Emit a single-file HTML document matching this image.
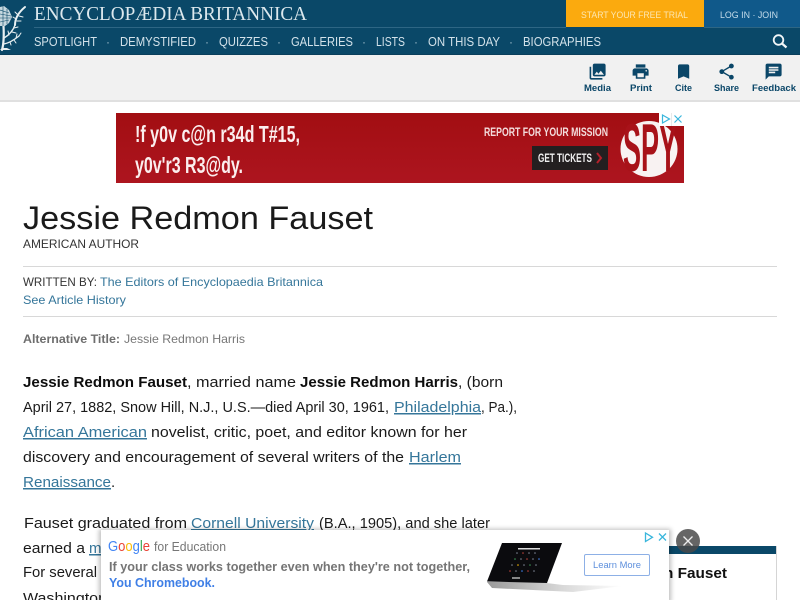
<!DOCTYPE html>
<html><head><meta charset="utf-8"><title>Jessie Redmon Fauset</title>
<style>
html,body{margin:0;padding:0;background:#fff;width:800px;height:600px;overflow:hidden}
svg{display:block;position:absolute;left:0;top:0}
text{font-family:"Liberation Sans",sans-serif}
.b{font-size:15px;fill:#1a1a1a}
.bb{font-size:15px;fill:#0d0d0d;font-weight:bold}
.l{font-size:15px;fill:#35769a;text-decoration:underline}
.n{font-size:13px;fill:#d3e2ea}
.d{font-size:12px;fill:#9fbccb}
.t{font-size:9.5px;font-weight:bold;fill:#0a4668}
</style></head><body>
<svg width="800" height="600" viewBox="0 0 800 600" xmlns="http://www.w3.org/2000/svg">
<defs>
<linearGradient id="red" x1="0" y1="0" x2="0" y2="1"><stop offset="0" stop-color="#a20e12"/><stop offset="1" stop-color="#ad151f"/></linearGradient>
<linearGradient id="base" x1="0" y1="0" x2="1" y2="0"><stop offset="0" stop-color="#9a9a9a"/><stop offset=".55" stop-color="#d8d8d8"/><stop offset="1" stop-color="#fff"/></linearGradient>
<filter id="sh" x="-5%" y="-30%" width="110%" height="160%"><feGaussianBlur stdDeviation="2.5"/></filter>
</defs>
<!-- header -->
<rect width="800" height="54" fill="#0a4868"/>
<rect y="54" width="800" height="1" fill="#0a3f5c"/>
<rect x="34" y="27" width="532" height="1" fill="#2e6684"/>
<rect x="566" width="138" height="27" fill="#fbaa0e"/>
<rect x="704" width="96" height="27" fill="#10598a"/>
<rect x="704" y="27" width="96" height="1" fill="#2e6684"/>
<!-- thistle -->
<g fill="none" stroke="#e8f0f2" stroke-linecap="round">
<path d="M2 50C4 43 4 35 3.500 26" stroke-width="2.200"/>
<path d="M4 38C9 35 13 31 15 25" stroke-width="1.400"/>
<path d="M4 44C9 43 14 40 19 36" stroke-width="1.300"/>
<path d="M15 25C15 18 19 12 25 7" stroke-width="2"/>
<path d="M9 35l-1-4M12 32l4 1M14 28l4-1M16 19l-3-2M18 15l-3-3M17 21l4 0M19 16l4 1M10 42l1 3M14 40l2 3M16 38l1-4M19 36l2-3" stroke-width="1"/>
</g>
<path d="M0 50h11l-4-2H2z" fill="#e8f0f2"/>
<path d="M0 7l4-1 5 4 3 7-3 6-4 3H0z" fill="#c6d8df"/>
<g stroke="#0a4868" stroke-width=".6"><path d="M0 10l9 3M0 14l11 2M0 18l11 0M0 22l9-2M3 6v20M7 9v15"/></g>
<text x="34" y="20" textLength="273" lengthAdjust="spacingAndGlyphs" style="font-family:'Liberation Serif',serif;font-size:20px;fill:#dce8ed">ENCYCLOPÆDIA BRITANNICA</text>
<text x="581" y="18" textLength="107" lengthAdjust="spacingAndGlyphs" style="font-size:9px;fill:#fde6b0">START YOUR FREE TRIAL</text>
<text x="720" y="18" textLength="58" lengthAdjust="spacingAndGlyphs" style="font-size:9px;fill:#c5dcea">LOG IN · JOIN</text>
<g>
<text class="n" x="34" y="46" textLength="63" lengthAdjust="spacingAndGlyphs">SPOTLIGHT</text>
<text class="d" x="106" y="46">·</text>
<text class="n" x="120" y="46" textLength="76" lengthAdjust="spacingAndGlyphs">DEMYSTIFIED</text>
<text class="d" x="205" y="46">·</text>
<text class="n" x="219" y="46" textLength="49" lengthAdjust="spacingAndGlyphs">QUIZZES</text>
<text class="d" x="277" y="46">·</text>
<text class="n" x="291" y="46" textLength="62" lengthAdjust="spacingAndGlyphs">GALLERIES</text>
<text class="d" x="362" y="46">·</text>
<text class="n" x="376" y="46" textLength="29" lengthAdjust="spacingAndGlyphs">LISTS</text>
<text class="d" x="414" y="46">·</text>
<text class="n" x="428" y="46" textLength="72" lengthAdjust="spacingAndGlyphs">ON THIS DAY</text>
<text class="d" x="509" y="46">·</text>
<text class="n" x="523" y="46" textLength="78" lengthAdjust="spacingAndGlyphs">BIOGRAPHIES</text>
</g>
<g fill="none" stroke="#f2f6f8"><circle cx="778.500" cy="40" r="4.800" stroke-width="1.800"/><path d="M782 43.500l4.500 4" stroke-width="2.200"/></g>
<!-- toolbar -->
<rect y="55" width="800" height="45" fill="#f1f1f1"/>
<rect y="100" width="800" height="2" fill="#e0e0e0"/>
<g fill="#0a4668">
<path transform="translate(588,62) scale(.8)" d="M22 16V4c0-1.100-.9-2-2-2H8c-1.100 0-2 .9-2 2v12c0 1.100.9 2 2 2h12c1.100 0 2-.9 2-2zm-11-4l2.030 2.710L16 11l4 5H8l3-4zM2 6v14c0 1.100.9 2 2 2h14v-2H4V6H2z"/>
<path transform="translate(631,62) scale(.8)" d="M19 8H5c-1.660 0-3 1.340-3 3v6h4v4h12v-4h4v-6c0-1.660-1.340-3-3-3zm-3 11H8v-5h8v5zm3-7c-.55 0-1-.45-1-1s.45-1 1-1 1 .45 1 1-.45 1-1 1zm-1-9H6v4h12V3z"/>
<path transform="translate(674,62) scale(.8)" d="M17 3H7c-1.100 0-1.990.9-1.990 2L5 21l7-3 7 3V5c0-1.100-.9-2-2-2z"/>
<path transform="translate(717,62) scale(.8)" d="M18 16.080c-.76 0-1.440.3-1.960.77L8.910 12.700c.05-.23.09-.46.09-.7s-.04-.47-.09-.7l7.050-4.110c.54.5 1.250.81 2.040.81 1.660 0 3-1.340 3-3s-1.340-3-3-3-3 1.340-3 3c0 .24.04.47.09.7L8.040 9.810C7.500 9.310 6.790 9 6 9c-1.660 0-3 1.340-3 3s1.340 3 3 3c.79 0 1.500-.31 2.040-.81l7.120 4.160c-.05.21-.08.43-.08.65 0 1.610 1.310 2.920 2.920 2.920 1.610 0 2.920-1.310 2.920-2.920s-1.310-2.920-2.920-2.920z"/>
<path transform="translate(764,62) scale(.8)" d="M20 2H4c-1.100 0-1.990.9-1.990 2L2 22l4-4h14c1.100 0 2-.9 2-2V4c0-1.100-.9-2-2-2zM6 9h12v2H6V9zm8 5H6v-2h8v2zm4-6H6V6h12v2z"/>
</g>
<text class="t" x="584" y="91" textLength="27" lengthAdjust="spacingAndGlyphs">Media</text>
<text class="t" x="630" y="91" textLength="22" lengthAdjust="spacingAndGlyphs">Print</text>
<text class="t" x="675" y="91" textLength="17" lengthAdjust="spacingAndGlyphs">Cite</text>
<text class="t" x="714" y="91" textLength="25" lengthAdjust="spacingAndGlyphs">Share</text>
<text class="t" x="752" y="91" textLength="44" lengthAdjust="spacingAndGlyphs">Feedback</text>
<!-- banner ad -->
<rect x="116" y="113" width="568" height="70" fill="url(#red)"/>
<text x="135" y="142" textLength="165" lengthAdjust="spacingAndGlyphs" style="font-size:23px;font-weight:bold;fill:#fbeeee">!f y0v c@n r34d T#15,</text>
<text x="135" y="173" textLength="108" lengthAdjust="spacingAndGlyphs" style="font-size:23px;font-weight:bold;fill:#fbeeee">y0v'r3 R3@dy.</text>
<text x="484" y="136" textLength="124" lengthAdjust="spacingAndGlyphs" style="font-size:11.500px;font-weight:bold;fill:#f3dcdc">REPORT FOR YOUR MISSION</text>
<rect x="532" y="146" width="76" height="24" fill="#231f20"/>
<text x="538" y="162" textLength="54" lengthAdjust="spacingAndGlyphs" style="font-size:11.500px;font-weight:bold;fill:#f0f0f0">GET TICKETS</text>
<path d="M597 153l4 5-4 5" fill="none" stroke="#b3202a" stroke-width="2"/>
<ellipse cx="649" cy="149" rx="28.500" ry="28" fill="#f8f2f2"/>
<text x="623" y="171" textLength="54" lengthAdjust="spacingAndGlyphs" style="font-size:68px;font-weight:bold;fill:#a81219">SPY</text>
<rect x="659" y="113" width="25" height="13" fill="#fff"/>
<path d="M662.500 115v8l7-4z" fill="none" stroke="#39b6dc" stroke-width="1.200"/>
<rect x="671" y="113" width="1" height="13" fill="#e8e8e8"/>
<path d="M674.500 115.500l7 7M681.500 115.500l-7 7" stroke="#39b6dc" stroke-width="1.200"/>
<!-- title -->
<text x="23" y="229" textLength="350" lengthAdjust="spacingAndGlyphs" style="font-size:32px;fill:#1a1a1a">Jessie Redmon Fauset</text>
<text x="23" y="248" textLength="116" lengthAdjust="spacingAndGlyphs" style="font-size:12px;fill:#333">AMERICAN AUTHOR</text>
<rect x="23" y="266" width="754" height="1" fill="#d8d8d8"/>
<text x="23" y="286" textLength="74" lengthAdjust="spacingAndGlyphs" style="font-size:12px;fill:#333">WRITTEN BY:</text>
<text x="100" y="286" textLength="223" lengthAdjust="spacingAndGlyphs" style="font-size:12px;fill:#35769a">The Editors of Encyclopaedia Britannica</text>
<text x="23" y="304" textLength="103" lengthAdjust="spacingAndGlyphs" style="font-size:12px;fill:#35769a">See Article History</text>
<rect x="23" y="316" width="754" height="1" fill="#d8d8d8"/>
<text x="23" y="343" textLength="97" lengthAdjust="spacingAndGlyphs" style="font-size:12px;font-weight:bold;fill:#6e6e6e">Alternative Title:</text>
<text x="124" y="343" textLength="121" lengthAdjust="spacingAndGlyphs" style="font-size:12px;fill:#777">Jessie Redmon Harris</text>
<!-- body -->
<text class="bb" x="23" y="387" textLength="164" lengthAdjust="spacingAndGlyphs">Jessie Redmon Fauset</text>
<text class="b" x="187" y="387" textLength="109" lengthAdjust="spacingAndGlyphs">, married name</text>
<text class="bb" x="300" y="387" textLength="158" lengthAdjust="spacingAndGlyphs">Jessie Redmon Harris</text>
<text class="b" x="458" y="387" textLength="45" lengthAdjust="spacingAndGlyphs">, (born</text>
<text class="b" x="23" y="412" textLength="366" lengthAdjust="spacingAndGlyphs">April 27, 1882, Snow Hill, N.J., U.S.—died April 30, 1961,</text>
<text class="l" x="394" y="412" textLength="87" lengthAdjust="spacingAndGlyphs">Philadelphia</text>
<text class="b" x="481" y="412" textLength="36" lengthAdjust="spacingAndGlyphs">, Pa.),</text>
<text class="l" x="23" y="437" textLength="124" lengthAdjust="spacingAndGlyphs">African American</text>
<text class="b" x="151" y="437" textLength="316" lengthAdjust="spacingAndGlyphs">novelist, critic, poet, and editor known for her</text>
<text class="b" x="23" y="462" textLength="381" lengthAdjust="spacingAndGlyphs">discovery and encouragement of several writers of the</text>
<text class="l" x="409" y="462" textLength="52" lengthAdjust="spacingAndGlyphs">Harlem</text>
<text class="l" x="23" y="487" textLength="88" lengthAdjust="spacingAndGlyphs">Renaissance</text>
<text class="b" x="111" y="487">.</text>
<text class="b" x="24" y="528" textLength="163" lengthAdjust="spacingAndGlyphs">Fauset graduated from</text>
<text class="l" x="191" y="528" textLength="123" lengthAdjust="spacingAndGlyphs">Cornell University</text>
<text class="b" x="319" y="528" textLength="171" lengthAdjust="spacingAndGlyphs">(B.A., 1905), and she later</text>
<text class="b" x="23" y="553" textLength="62" lengthAdjust="spacingAndGlyphs">earned a</text>
<text class="l" x="89" y="553">master</text>
<text class="b" x="23" y="577" textLength="74" lengthAdjust="spacingAndGlyphs">For several</text>
<text class="b" x="23" y="603" textLength="84" lengthAdjust="spacingAndGlyphs">Washington</text>
<!-- right box -->
<rect x="640" y="554" width="136" height="46" fill="#fff"/>
<rect x="640" y="546" width="136" height="8" fill="#0a4868"/>
<rect x="776" y="546" width="1" height="54" fill="#d5d5d5"/>
<text x="664" y="578" textLength="63" lengthAdjust="spacingAndGlyphs" style="font-size:14.500px;font-weight:bold;fill:#111">n Fauset</text>
<!-- bottom ad -->
<rect x="99" y="529" width="572" height="74" fill="#000" opacity=".25" filter="url(#sh)"/>
<rect x="101" y="530" width="568" height="70" fill="#fff"/>
<text x="108" y="551" textLength="42" lengthAdjust="spacingAndGlyphs" style="font-size:15px"><tspan fill="#4285f4">G</tspan><tspan fill="#ea4335">o</tspan><tspan fill="#fbbc05">o</tspan><tspan fill="#4285f4">g</tspan><tspan fill="#34a853">l</tspan><tspan fill="#ea4335">e</tspan></text>
<text x="154" y="551" textLength="72" lengthAdjust="spacingAndGlyphs" style="font-size:12.500px;fill:#777">for Education</text>
<text x="109" y="571" textLength="361" lengthAdjust="spacingAndGlyphs" style="font-size:12.500px;font-weight:bold;fill:#757575">If your class works together even when they're not together,</text>
<text x="109" y="587" textLength="106" lengthAdjust="spacingAndGlyphs" style="font-size:12.500px;font-weight:bold;fill:#3f7fe6">You Chromebook.</text>
<!-- laptop -->
<path d="M487 582l5 6 81 4 50-6-60-1-25-3z" fill="url(#base)"/>
<path d="M502 543h60l-15 40-60-1.500z" fill="#0b0b0e"/>
<rect x="518" y="548" width="22" height="1.500" fill="#ddd"/>
<g fill="#7f8796">
<circle cx="517" cy="553" r=".8"/><circle cx="523" cy="553" r=".8" fill="#c0453c"/><circle cx="529" cy="553" r=".8"/><circle cx="535" cy="553" r=".8"/>
<circle cx="515" cy="559" r=".8" fill="#3f9a58"/><circle cx="521" cy="559" r=".8"/><circle cx="527" cy="559" r=".8" fill="#c0453c"/><circle cx="533" cy="559" r=".8"/><circle cx="539" cy="559" r=".8" fill="#4285f4"/>
<circle cx="512" cy="565" r=".8"/><circle cx="518" cy="565" r=".8" fill="#fbbc05"/><circle cx="524" cy="565" r=".8"/><circle cx="530" cy="565" r=".8" fill="#3f9a58"/><circle cx="536" cy="565" r=".8"/>
<circle cx="510" cy="571" r=".8" fill="#c0453c"/><circle cx="516" cy="571" r=".8"/><circle cx="522" cy="571" r=".8" fill="#4285f4"/><circle cx="528" cy="571" r=".8" fill="#c0453c"/><circle cx="534" cy="571" r=".8"/>
</g>
<rect x="512" y="577" width="8" height="2" fill="#888"/>
<rect x="584.500" y="554.500" width="65" height="21" rx="1.500" fill="#fff" stroke="#8db0e6"/>
<text x="593" y="568" textLength="48" lengthAdjust="spacingAndGlyphs" style="font-size:9.500px;fill:#5d8fdc">Learn More</text>
<path d="M645.500 533v8.500l7-4.200z" fill="none" stroke="#39b6dc" stroke-width="1.300"/>
<path d="M659 533.500l7 7M666 533.500l-7 7" stroke="#39b6dc" stroke-width="1.300"/>
<circle cx="688" cy="541" r="12" fill="#4a4a4a" opacity=".85"/>
<path d="M683.500 536.500l9 9M692.500 536.500l-9 9" stroke="#eee" stroke-width="1.300"/>
</svg>
</body></html>
